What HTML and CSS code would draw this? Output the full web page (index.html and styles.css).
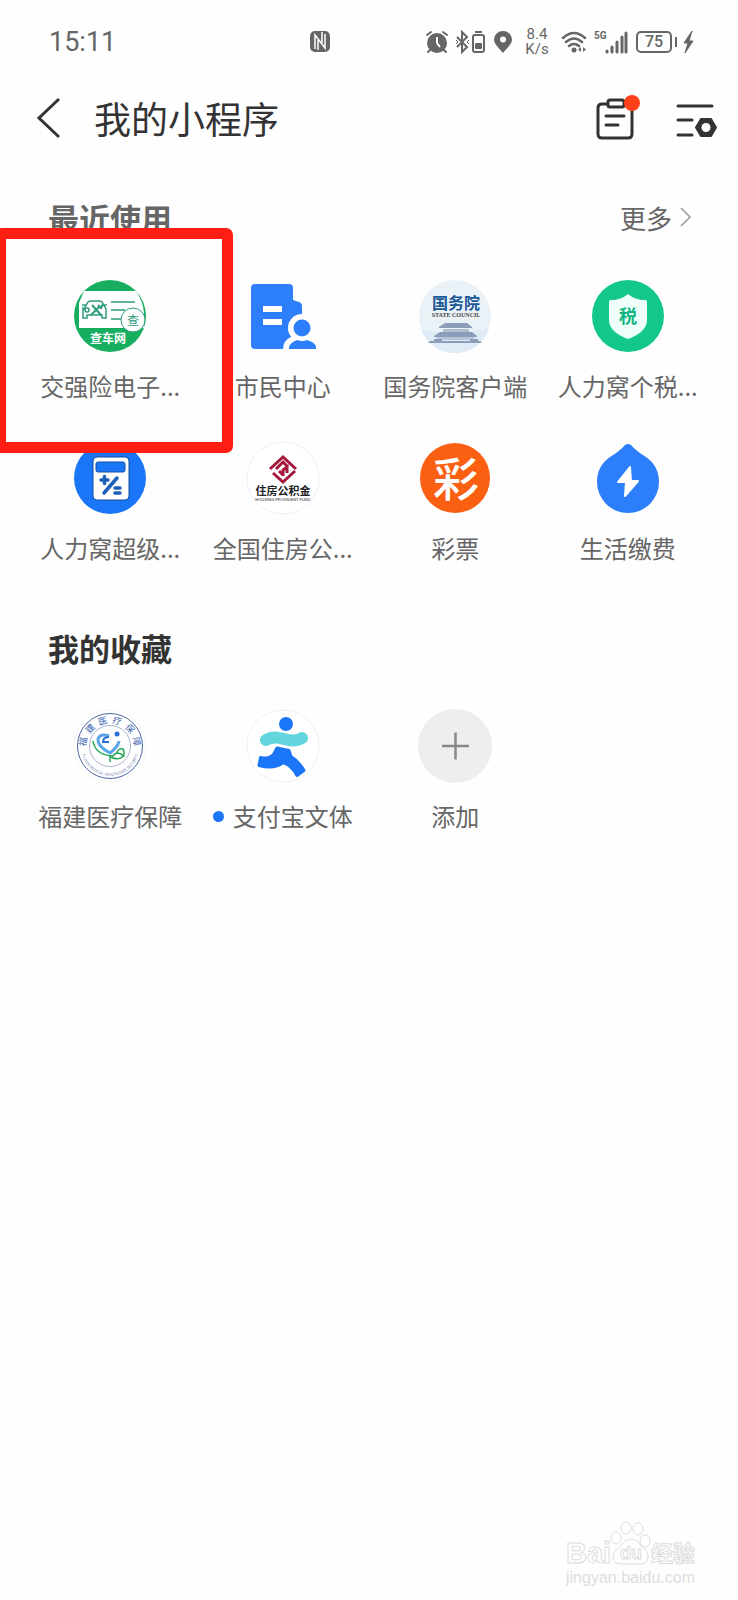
FILE: index.html
```html
<!doctype html>
<html lang="zh-CN">
<head>
  <meta charset="utf-8">
  <meta name="viewport" content="width=device-width, initial-scale=1">
  <title>我的小程序</title>
  <link rel="stylesheet" href="styles.css">
</head>
<body>
  <div id="statusBar">
    <span class="time">15:11</span>
    <svg class="nfc" width="22" height="22" viewBox="0 0 22 22">
      <rect x="1" y="0" width="20" height="21" rx="5" fill="#666"/>
      <path d="M6 18V4l10 13V3M9 19V9M13 12V1" fill="none" stroke="#fff" stroke-width="1.5"/>
    </svg>
    <div class="statusIcons">
      <svg width="24" height="24" viewBox="0 0 24 24">
        <circle cx="12" cy="13" r="10" fill="#666"/>
        <path d="M2 5l4-3M22 5l-4-3M5 20l-2 2M19 20l2 2" stroke="#666" stroke-width="2" stroke-linecap="round"/>
        <path d="M12 7v6l3 4" fill="none" stroke="#fff" stroke-width="2"/>
      </svg>
      <svg width="32" height="24" viewBox="0 0 32 24">
        <path d="M2 7l10 10-5 5V2l5 5L2 17" fill="none" stroke="#666" stroke-width="2"/>
        <path d="M1 10l2 2-2 2M14 10l-2 2 2 2" fill="none" stroke="#666"/>
        <rect x="18" y="5" width="11" height="17" rx="2" fill="none" stroke="#666" stroke-width="2"/>
        <path d="M20 2h7" stroke="#666" stroke-width="2"/>
        <rect x="20" y="13" width="7" height="6" rx="1" fill="#666"/>
      </svg>
      <svg width="20" height="24" viewBox="0 0 20 24">
        <path d="M10 23C6 18 1 14 1 9.500a9 8.500 0 0 1 18 0C19 14 14 18 10 23z" fill="#666"/>
        <circle cx="10" cy="9.500" r="3" fill="#fff"/>
      </svg>
      <span class="rate"><span>8.4</span><span>K/s</span></span>
      <svg width="27" height="24" viewBox="0 0 27 24">
        <path d="M2 8q11-10 22 0M5 12q8-7 16 0M8 16q5-4 10 0" fill="none" stroke="#666" stroke-width="2.500" stroke-linecap="round"/>
        <circle cx="13" cy="20" r="2.500" fill="#666"/>
        <path d="M20 17v5l-3-2.500zM22 17v5l3-2.500z" fill="#666"/>
      </svg>
      <svg width="36" height="24" viewBox="0 0 36 24">
        <text x="0" y="9" class="fiveG">5G</text>
        <path d="M13 21v1M18 17v5M23 12v10M28 7v15M32 3v19" stroke="#666" stroke-width="3" stroke-linecap="round"/>
      </svg>
      <span class="battery">75</span>
      <svg width="11" height="24" viewBox="0 0 11 24">
        <path d="M9 1L1 13h4l-3 10 8-12H6z" fill="#666" stroke="#666"/>
      </svg>
    </div>
  </div>

  <header id="titleBar">
    <button class="iconButton" aria-label="返回">
      <svg width="26" height="42" viewBox="0 0 26 42">
        <path d="M23 2L3 21 23 40" fill="none" stroke="#333" stroke-width="3"/>
      </svg>
    </button>
    <h1>我的小程序</h1>
    <button class="iconButton" aria-label="任务">
      <svg width="44" height="48" viewBox="0 0 44 48">
        <path d="M11 10H6q-4 0-4 4v26q0 4 4 4h26q4 0 4-4V14q0-4-4-4h-3" fill="none" stroke="#333" stroke-width="3"/>
        <rect x="12" y="6" width="16" height="7" rx="2" fill="#fff" stroke="#333" stroke-width="3"/>
        <path d="M10 22h18M10 31h12" stroke="#333" stroke-width="3" stroke-linecap="round"/>
        <circle cx="36" cy="9" r="8" fill="#ff4019"/>
      </svg>
    </button>
    <button class="iconButton" aria-label="设置">
      <svg width="42" height="48" viewBox="0 0 42 48">
        <path d="M2 12h34M2 26h14M2 41h14" stroke="#333" stroke-width="3" stroke-linecap="round"/>
        <path d="M25 25h10l5 8.500-5 8.500H25l-5-8.500z" fill="#333" stroke="#333" stroke-width="2" stroke-linejoin="round"/>
        <circle cx="30" cy="33.500" r="4.500" fill="#fff"/>
      </svg>
    </button>
  </header>

  <main>
    <section>
      <div class="sectionHead">
        <h2 class="muted">最近使用</h2>
        <a class="more" href="#">更多
          <svg width="12" height="22" viewBox="0 0 12 22">
            <path d="M1 2l9 9-9 9" fill="none" stroke="#999" stroke-width="1.500"/>
          </svg>
        </a>
      </div>
      <div class="apps">
        <a class="app marked" href="#">
          <svg class="appIcon" viewBox="0 0 74 74">
            <circle cx="37" cy="37" r="36" fill="#17ae60"/>
            <path d="M11 12h52q7 10 8 22v15H6V24z" fill="#fff"/>
            <g fill="none" stroke="#2d9b7c" stroke-width="1.500">
              <path d="M11 30l4-7q1-1 3-1h8q2 0 3 1l4 7v9h-4v-3H14v3h-4V29zM9 26h4M31 26h3"/>
              <circle cx="14" cy="31" r="2"/>
              <path d="M18 36l9-9M19 26l9 10M25 26l3 3 2-4" stroke-width="2"/>
              <path d="M38 23h24M38 31h14M38 40h10"/>
            </g>
            <circle cx="60" cy="41" r="12" fill="#fff" stroke="#2d9b7c"/>
            <text x="60" y="46" class="glyph" font-size="12" fill="#2d9b7c">查</text>
            <text x="35" y="64" class="glyph bold" font-size="12" fill="#fff">查车网</text>
          </svg>
          <span class="label">交强险电子...</span>
        </a>
        <a class="app" href="#">
          <svg class="appIcon" viewBox="0 0 74 74">
            <path d="M9 5h34q4 0 4 4v12l6 2q3 1 3 4v20L37 70H9q-4 0-4-4V9q0-4 4-4z" fill="#2c7efa"/>
            <path d="M17 27h19v6H17zM17 40h19v6H17z" fill="#fff"/>
            <circle cx="56" cy="49" r="14" fill="#fff"/>
            <path d="M37 71q0-10 8-13h26v13z" fill="#fff"/>
            <circle cx="56" cy="49" r="8.500" fill="#2c7efa"/>
            <path d="M43 70v-2q1-4 8-7 5 2 10 0 9 3 9 7v2z" fill="#2c7efa"/>
          </svg>
          <span class="label">市民中心</span>
        </a>
        <a class="app" href="#">
          <svg class="appIcon" viewBox="0 0 74 74">
            <circle cx="37" cy="37" r="36" fill="#ebf2f7"/>
            <path d="M3 50q15 4 34 3t34-3a36 36 0 0 1-68 0z" fill="#dfebf7"/>
            <text x="38" y="30" class="glyph bold" font-size="16" fill="#1a5796">国务院</text>
            <text x="38" y="38" class="serif" font-size="6" fill="#444">STATE COUNCIL</text>
            <g fill="#8b9db8">
              <path d="M27 44h22l5 4v1H21v-1z"/>
              <path d="M25 50h26v3H25z" opacity=".6"/>
              <path d="M22 53h32l5 4v1H16v-1z"/>
              <path d="M19 58h37v3H19z" opacity=".5"/>
              <path d="M16 60h8v2h-8zM52 60h8v2h-8zM12 62h50l2 2H10z"/>
            </g>
          </svg>
          <span class="label">国务院客户端</span>
        </a>
        <a class="app" href="#">
          <svg class="appIcon" viewBox="0 0 74 74">
            <circle cx="37" cy="37" r="36" fill="#12c98a"/>
            <path d="M37 15q7 6 17 6 2 0 2 2v18q0 12-19 19-19-7-19-19V23q0-2 2-2 10 0 17-6z" fill="#effffa"/>
            <text x="37" y="44" class="glyph bold" font-size="18" fill="#12b581">税</text>
          </svg>
          <span class="label">人力窝个税...</span>
        </a>
        <a class="app" href="#">
          <svg class="appIcon" viewBox="0 0 74 74">
            <circle cx="37" cy="37" r="36" fill="#1b76f7"/>
            <rect x="20" y="16" width="36" height="43" rx="4" fill="#fff" stroke="#124f9f"/>
            <rect x="23" y="21" width="29" height="10" rx="2" fill="#1b76f7" stroke="#124f9f"/>
            <path d="M28 39h7M31.500 35.500v7M31 52l13-15M42 47h5M42 52h5" stroke="#1c5fb8" stroke-width="3.500" stroke-linecap="round"/>
          </svg>
          <span class="label">人力窝超级...</span>
        </a>
        <a class="app" href="#">
          <svg class="appIcon" viewBox="0 0 74 74">
            <circle cx="37" cy="37" r="36" fill="#fff" stroke="#f0f0f0"/>
            <path d="M24 28l13-12 13 12M30 28l7-7 5 5M27 32l10 9 12-11M33 30l4 4M37 35v-6l4-3v6" fill="none" stroke="#a5183c" stroke-width="3"/>
            <text x="37" y="54" class="glyph bold" font-size="11" fill="#222">住房公积金</text>
            <text x="37" y="60" class="tiny" font-size="4" fill="#222">HOUSING PROVIDENT FUND</text>
          </svg>
          <span class="label">全国住房公...</span>
        </a>
        <a class="app" href="#">
          <svg class="appIcon" viewBox="0 0 74 74">
            <circle cx="37" cy="37" r="35" fill="#fb6012"/>
            <text x="38" y="55" class="glyph medium" font-size="46" fill="#fff">彩</text>
          </svg>
          <span class="label">彩票</span>
        </a>
        <a class="app" href="#">
          <svg class="appIcon" viewBox="0 0 74 74">
            <path d="M34 4q3-2 6 0 5 6 15 12C64 22 68 31 68 41a31 31 0 0 1-62 0C6 31 10 22 19 16Q29 10 34 4z" fill="#2c7efa"/>
            <path d="M39 26L27 41h8l-1 14 13-15h-7z" fill="#fff" stroke="#fff" stroke-width="2" stroke-linejoin="round"/>
          </svg>
          <span class="label">生活缴费</span>
        </a>
      </div>
    </section>

    <section>
      <div class="sectionHead">
        <h2>我的收藏</h2>
      </div>
      <div class="apps">
        <a class="app" href="#">
          <svg class="appIcon" viewBox="0 0 74 74">
            <defs>
              <path id="topArc" d="M14 45a24 24 0 1 1 46 0"/>
              <path id="bottomArc" d="M8 38a29 29 0 0 0 58 0"/>
            </defs>
            <circle cx="37" cy="37" r="36" fill="#fff" stroke="#f5f5f5"/>
            <circle cx="37" cy="37" r="32.500" fill="none" stroke="#4a66a5"/>
            <circle cx="37" cy="37" r="20.500" fill="none" stroke="#8497bd" stroke-width=".7"/>
            <text font-size="9" fill="#4468b0" class="arc"><textPath href="#topArc" startOffset="50%">福&nbsp;&nbsp;建&nbsp;&nbsp;医&nbsp;&nbsp;疗&nbsp;&nbsp;保&nbsp;&nbsp;障</textPath></text>
            <text font-size="4" fill="#7c8db5" class="arc"><textPath href="#bottomArc" startOffset="50%">FUJIAN MEDICAL HEALTHCARE SECURITY</textPath></text>
            <path d="M36 27q-9-3-11 3-1 7 12 14 8-6 9-12" fill="none" stroke="#58a5ea" stroke-width="3"/>
            <path d="M36 28q-6 0-6 5h6" fill="none" stroke="#2a6fd6" stroke-width="2"/>
            <circle cx="44" cy="25" r="2.500" fill="#2a6fd6"/>
            <path d="M20 32q2 14 20 15M37 53v-7M38 48q7 4 13-1-7-6-11 0M44 45q0-6 6-5 3 5-2 9" fill="none" stroke="#27a658" stroke-width="1.500"/>
          </svg>
          <span class="label">福建医疗保障</span>
        </a>
        <a class="app" href="#">
          <svg class="appIcon" viewBox="0 0 74 74">
            <circle cx="37" cy="37" r="36" fill="#fff" stroke="#f0f0f0"/>
            <path d="M20 31C33 23 43 37 56 29" fill="none" stroke="#63d5dc" stroke-width="12" stroke-linecap="round"/>
            <circle cx="40" cy="15" r="7" fill="#1b76f7"/>
            <path d="M31 39l12 2.500 2 6q8 5 13 14l-7 5q-5-10-14-13-8 7-24 3l1.500-8q8 2 13-3z" fill="#1b76f7" stroke="#1b76f7" stroke-width="3" stroke-linejoin="round"/>
          </svg>
          <span class="label unread">支付宝文体</span>
        </a>
        <a class="app" href="#">
          <svg class="appIcon" viewBox="0 0 74 74">
            <circle cx="37" cy="37" r="37" fill="#eee"/>
            <path d="M24 37h27M37.500 23.500v27" stroke="#888" stroke-width="2.500"/>
          </svg>
          <span class="label">添加</span>
        </a>
      </div>
    </section>
  </main>

  <footer>
    <svg width="136" height="72" viewBox="0 0 136 72">
      <g fill="#fff" stroke="#ddd">
        <text x="0" y="43" class="latin" font-size="29">Bai</text>
        <ellipse cx="50" cy="18" rx="5" ry="6"/>
        <ellipse cx="60" cy="8" rx="5" ry="6"/>
        <ellipse cx="72" cy="9" rx="5" ry="6"/>
        <ellipse cx="79" cy="21" rx="5" ry="6"/>
        <path d="M65 19q6 0 10 7 7 5 7 11 0 7-9 7H56q-9 0-9-7 0-6 8-11 4-7 10-7z"/>
        <text x="54" y="39" class="latin" font-size="18">du</text>
        <text x="85" y="41" class="hanzi" font-size="22">经验</text>
      </g>
      <text x="0" y="63" class="url">jingyan.baidu.com</text>
    </svg>
  </footer>
</body>
</html>
```

FILE: styles.css
```css
* {
  box-sizing: border-box;
}

body {
  display: flex;
  flex-direction: column;
  min-height: 100vh;
  margin: 0;
  overflow-x: hidden;
  background: #fefefe;
  color: #333;
  font-family: "Noto Sans CJK SC", sans-serif;
}

a {
  color: #666;
  text-decoration: none;
}

svg {
  display: block;
  flex: none;
}

h1, h2 {
  margin: 0;
}

/* status bar */

#statusBar {
  display: flex;
  align-items: center;
  height: 84px;
  padding: 0 44px 0 49px;
  color: #666;
  font-family: Roboto, sans-serif;
}

.time {
  width: 260px;
  font-size: 27px;
}

.statusIcons {
  display: flex;
  align-items: center;
  gap: 6px;
  margin-left: auto;
}

.rate {
  display: flex;
  flex-direction: column;
  align-items: center;
  width: 36px;
  font-size: 15px;
  line-height: 15px;
}

.fiveG {
  fill: #666;
  font-size: 10px;
  font-weight: bold;
}

.battery {
  position: relative;
  width: 36px;
  margin-right: 5px;
  border: 2px solid #666;
  border-radius: 5px;
  font-size: 16px;
  font-weight: 500;
  line-height: 18px;
  text-align: center;
}

.battery::after {
  content: "";
  position: absolute;
  top: 4px;
  right: -7px;
  width: 2px;
  height: 10px;
  background: #666;
}

/* title bar */

#titleBar {
  display: flex;
  align-items: center;
  height: 68px;
  padding: 0 20px 0 36px;
}

#titleBar h1 {
  flex: 1;
  margin-left: 32px;
  font-size: 37px;
  font-weight: 400;
}

.iconButton {
  padding: 0;
  border: 0;
  background: none;
}

.iconButton + .iconButton {
  margin-left: 36px;
}

/* app lists */

main {
  flex: 1;
  padding: 47px 24px 0;
}

section {
  margin-bottom: 65px;
}

.sectionHead {
  display: flex;
  align-items: center;
  justify-content: space-between;
  height: 36px;
  margin-bottom: 44px;
  padding: 0 22px 0 24px;
}

.sectionHead h2 {
  font-size: 31px;
  font-weight: 700;
}

.sectionHead .muted {
  color: #666;
}

.more {
  display: flex;
  align-items: center;
  gap: 8px;
  font-size: 26px;
}

.apps {
  display: grid;
  grid-template-columns: repeat(4, 1fr);
  row-gap: 39px;
}

.app {
  position: relative;
  display: flex;
  flex-direction: column;
  align-items: center;
}

.appIcon {
  width: 74px;
  height: 74px;
}

.label {
  display: flex;
  align-items: center;
  margin-top: 17px;
  font-size: 24px;
  line-height: 32px;
  white-space: nowrap;
}

.unread::before {
  content: "";
  width: 11px;
  height: 11px;
  margin-right: 9px;
  border-radius: 50%;
  background: #1b76f7;
}

/* red frame round the highlighted app */
.marked::after {
  content: "";
  position: absolute;
  z-index: 1;
  top: -51px;
  right: -36px;
  bottom: -51px;
  left: -29px;
  border: 11px solid #ff1e14;
  border-radius: 7px;
}

/* text inside icons */

.glyph, .serif, .tiny, .arc {
  text-anchor: middle;
}

.bold {
  font-weight: 700;
}

.medium {
  font-weight: 500;
}

.serif {
  font-family: "Liberation Serif", serif;
  font-weight: 700;
}

.tiny {
  font-family: "Liberation Sans", sans-serif;
}

/* watermark */

footer {
  display: flex;
  justify-content: flex-end;
  padding: 0 36px 8px;
}

.latin {
  font-family: "Liberation Sans", sans-serif;
  font-weight: 700;
}

.hanzi {
  font-weight: 700;
}

.url {
  fill: #ddd;
  font-family: "Liberation Sans", sans-serif;
  font-size: 16px;
}
```
